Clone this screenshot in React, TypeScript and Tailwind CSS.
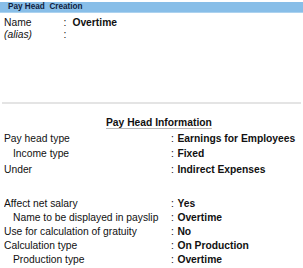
import React from "react";

type Row = {
  label: string;
  value: string;
  indent?: boolean;
  lh: string;
  mt?: string;
};

const infoRows: Row[] = [
  { label: "Pay head type", value: "Earnings for Employees", lh: "leading-[15px]", mt: "mt-[2px]" },
  { label: "Income type", value: "Fixed", indent: true, lh: "leading-[16px]" },
  { label: "Under", value: "Indirect Expenses", lh: "leading-[15px]" },
  { label: "Affect net salary", value: "Yes", lh: "leading-[14px]", mt: "mt-[20px]" },
  { label: "Name to be displayed in payslip", value: "Overtime", indent: true, lh: "leading-[14px]" },
  { label: "Use for calculation of gratuity", value: "No", lh: "leading-[14px]" },
  { label: "Calculation type", value: "On Production", lh: "leading-[14px]" },
  { label: "Production type", value: "Overtime", indent: true, lh: "leading-[14px]" },
];

const App = () => {
  return (
    <div
      className="w-[303px] h-[268px] bg-white overflow-hidden text-[10.3px] text-[#111]"
      style={{ fontFamily: '"Liberation Sans", Arial, sans-serif' }}
    >
      {/* Title bar */}
      <div className="mt-[2px] h-[11px] bg-[#88bee8] border-b border-[#acd2ef] pl-[8px] text-[8.2px] font-bold leading-[10px] text-[#0f1d40] whitespace-pre">
        {"Pay Head  Creation"}
      </div>

      {/* Name / alias */}
      <div className="mt-[4px] pl-[4px]">
        <div className="flex leading-[12px]">
          <span className="w-[59.5px] shrink-0">Name</span>
          <span>:</span>
          <span className="ml-[6px] font-bold">Overtime</span>
        </div>
        <div className="flex leading-[12px]">
          <span className="w-[59.5px] shrink-0 italic">(alias)</span>
          <span>:</span>
        </div>
      </div>

      {/* Separator */}
      <div className="mt-[61px] mx-[2px] h-[2px] bg-[#e4e4e4]" />

      {/* Pay Head Information */}
      <div className="mt-[13px] pl-[106px] leading-[12px]">
        <span className="font-bold underline decoration-[#b8b8b8] underline-offset-[2px]">
          Pay Head Information
        </span>
      </div>

      <div className="pl-[4px]">
        {infoRows.map((r, i) => (
          <div key={i} className={`flex whitespace-nowrap ${r.lh} ${r.mt ?? ""}`}>
            <span className={`w-[167px] shrink-0 overflow-hidden ${r.indent ? "pl-[9px]" : ""}`}>
              {r.label}
            </span>
            <span>:</span>
            <span className="ml-[3.5px] font-bold">{r.value}</span>
          </div>
        ))}
      </div>
    </div>
  );
};

export default App;
